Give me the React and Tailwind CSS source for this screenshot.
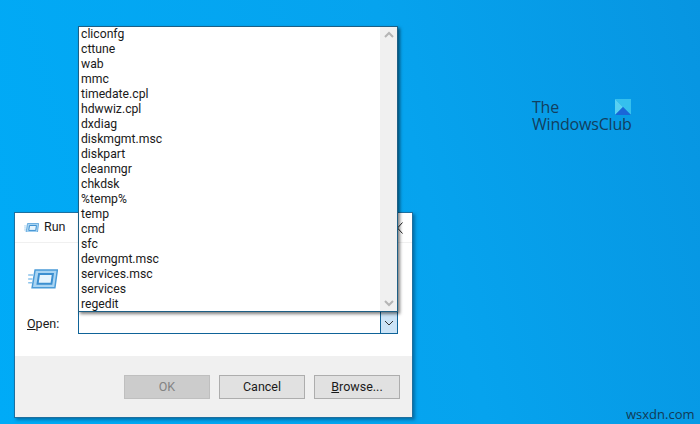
import React from 'react'

const ITEMS = [
  'cliconfg', 'cttune', 'wab', 'mmc', 'timedate.cpl', 'hdwwiz.cpl', 'dxdiag', 'diskmgmt.msc', 'diskpart',
  'cleanmgr', 'chkdsk', '%temp%', 'temp', 'cmd', 'sfc', 'devmgmt.msc', 'services.msc', 'services', 'regedit',
]

function RunIcon({ size = 16 }) {
  return (
    <svg width={size} height={size * 0.66} viewBox="0 0 30 20" fill="none">
      <path d="M7 1 H29.5 L27 19 H4 Z" fill="#a9d4f2" stroke="#4a9bd8" strokeWidth="1.5" />
      <path d="M11 5 H25 L23.5 15 H9.5 Z" fill="#e6f4fd" stroke="#3c8fd0" strokeWidth="2" />
      <path d="M0 6 H5 M0 10 H4.5 M0 14 H4" stroke="#8cc4ec" strokeWidth="1.5" />
    </svg>
  )
}

function Button({ children, disabled }) {
  return (
    <button className={`w-[86px] h-[24px] border text-[12.5px] ${disabled ? 'border-[#bfbfbf] bg-[#cccccc] text-[#838383]' : 'border-[#adadad] bg-[#e1e1e1] text-[#1a1a1a]'}`}>
      {children}
    </button>
  )
}

export default function App() {
  return (
    <div className="relative w-[700px] h-[424px] overflow-hidden bg-[linear-gradient(75deg,#00abf7_0%,#06a3ee_60%,#0795e1_100%)] font-['Roboto','Noto_Sans',sans-serif]">
      {/* Logo */}
      <div className="absolute left-[532px] top-[99px] text-[#123f5f] text-[16px] leading-[17px] tracking-[-0.2px] font-['Open_Sans',sans-serif]">
        The<br />WindowsClub
        <svg className="absolute left-[83px] top-[0px]" width="16" height="16" viewBox="0 0 16 16">
          <path d="M0 0 L16 0 L16 16 Z" fill="#35c0ee" />
          <path d="M0 0 L8 8 L0 16 Z" fill="#58d0f2" />
          <path d="M0 16 L8 8 L16 16 Z" fill="#1a66d8" />
        </svg>
      </div>

      {/* Run dialog */}
      <div className="absolute left-[14px] top-[212px] w-[399px] h-[206px] border border-[#1d6f9f] bg-white shadow-[2px_2px_3px_rgba(0,60,100,0.5)] flex flex-col text-[12.5px] text-[#1a1a1a]">
        <div className="h-[30px] flex items-center gap-[5px] pl-[9px] border-b border-[#f0f0f0]">
          <RunIcon size={15} />
          <span>Run</span>
        </div>
        <div className="flex-1">
          <div className="pl-[13px] pt-[26px] h-[68px]"><RunIcon size={30} /></div>
          <div className="flex items-start pl-[12px]">
            <span className="w-[51px] pt-[4px]"><u>O</u>pen:</span>
            <div className="w-[320px] h-[23px] border border-[#0f6398] flex justify-end">
              <div className="w-[17px] bg-[#cce4f7] border-l border-[#0f6398] flex items-center justify-center">
                <svg width="10" height="6" viewBox="0 0 10 6" fill="none"><path d="M1 1 L5 5 L9 1" stroke="#333" /></svg>
              </div>
            </div>
          </div>
        </div>
        <div className="h-[61px] bg-[#f0f0f0] flex justify-end items-start gap-[9px] pt-[19px] pr-[12px]">
          <Button disabled>OK</Button>
          <Button>Cancel</Button>
          <Button><u>B</u>rowse...</Button>
        </div>
      </div>

      {/* Close glyph peeking out past the list */}
      <svg className="absolute left-[397px] top-[222px]" width="6" height="12" viewBox="0 0 6 12" fill="none">
        <path d="M5.5 0.5 L0.5 6 L5.5 11.5" stroke="#222" />
      </svg>

      {/* Dropdown list */}
      <div className="absolute left-[78px] top-[26px] w-[320px] h-[286px] border border-[#1d5f85] bg-white shadow-[2px_2px_3px_rgba(0,0,0,0.5)] flex text-[12.2px] text-[#1a1a1a]">
        <ul className="flex-1 pl-[2px]">
          {ITEMS.map(item => (
            <li key={item} className="h-[15px] leading-[15px]">{item}</li>
          ))}
        </ul>
        <div className="w-[17px] bg-[#f0f0f0] flex flex-col justify-between items-center py-[4px]">
          <svg width="10" height="7" viewBox="0 0 10 7" fill="none"><path d="M1 6 L5 2 L9 6" stroke="#b5b5b5" strokeWidth="2" /></svg>
          <svg width="10" height="7" viewBox="0 0 10 7" fill="none"><path d="M1 1 L5 5 L9 1" stroke="#b5b5b5" strokeWidth="2" /></svg>
        </div>
      </div>

      {/* Watermark */}
      <span className="absolute left-[626px] top-[405px] text-[13px] text-[#123a55] font-['Open_Sans',sans-serif]">wsxdn.com</span>
    </div>
  )
}
